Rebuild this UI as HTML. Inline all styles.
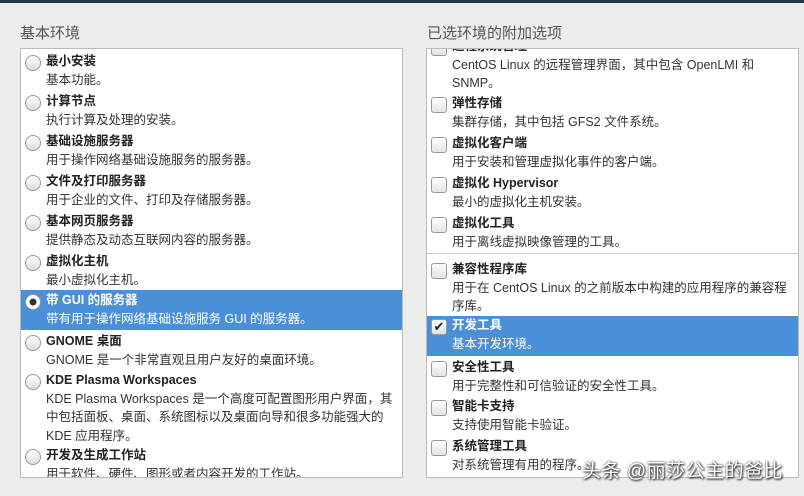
<!DOCTYPE html><html><head><meta charset="utf-8"><style>
body{margin:0;width:804px;height:496px;background:#ececec;font-family:"Liberation Sans","Noto Sans CJK SC",sans-serif;position:relative;overflow:hidden;color:#2e3436}
.top{position:absolute;left:0;top:0;width:804px;height:3px;background:#2a3442}
.h{position:absolute;top:22px;font-size:15px;color:#555}
.box{position:absolute;top:48px;height:428px;background:#fff;border:1px solid #bbb;overflow:hidden}
.it{position:absolute;left:0;right:0;font-size:12.5px;line-height:18.5px}
.it b{font-weight:bold;color:#222}
.it .d{color:#333}
.sel{background:#4a90d9}
.sel b,.sel .d{color:#fff}
.r{position:absolute;left:4px;width:14px;height:14px;border-radius:50%;border:1px solid #999;background:linear-gradient(#fff,#ddd)}
.c{position:absolute;left:4px;width:14px;height:14px;border-radius:3px;border:1px solid #999;background:linear-gradient(#fff,#e2e2e2)}
.t{position:absolute;left:25px;right:4px}
.wm{position:absolute;left:582px;top:456px;font-size:19px;color:#fff;text-shadow:0 0 2px #333,1px 1px 2px #000;letter-spacing:0.5px}
</style></head><body>
<div class="top"></div>
<div class="h" style="left:20px">基本环境</div>
<div class="h" style="left:427px">已选环境的附加选项</div>
<div class="box" style="left:20px;width:381px">
<div class="it" style="top:3px;height:40px"><span class="r" style="top:3px"></span><div class="t"><b>最小安装</b><br><span class="d">基本功能。</span></div></div>
<div class="it" style="top:43px"><span class="r" style="top:3px"></span><div class="t"><b>计算节点</b><br><span class="d">执行计算及处理的安装。</span></div></div>
<div class="it" style="top:83px"><span class="r" style="top:3px"></span><div class="t"><b>基础设施服务器</b><br><span class="d">用于操作网络基础设施服务的服务器。</span></div></div>
<div class="it" style="top:123px"><span class="r" style="top:3px"></span><div class="t"><b>文件及打印服务器</b><br><span class="d">用于企业的文件、打印及存储服务器。</span></div></div>
<div class="it" style="top:163px"><span class="r" style="top:3px"></span><div class="t"><b>基本网页服务器</b><br><span class="d">提供静态及动态互联网内容的服务器。</span></div></div>
<div class="it" style="top:203px"><span class="r" style="top:3px"></span><div class="t"><b>虚拟化主机</b><br><span class="d">最小虚拟化主机。</span></div></div>
<div class="it sel" style="top:241px;height:40px"><span class="r" style="top:4px;background:radial-gradient(#333 30%,#fff 40%)"></span><div class="t" style="top:1px"><b>带 GUI 的服务器</b><br><span class="d">带有用于操作网络基础设施服务 GUI 的服务器。</span></div></div>
<div class="it" style="top:283px"><span class="r" style="top:3px"></span><div class="t"><b>GNOME 桌面</b><br><span class="d">GNOME 是一个非常直观且用户友好的桌面环境。</span></div></div>
<div class="it" style="top:322px"><span class="r" style="top:3px"></span><div class="t"><b>KDE Plasma Workspaces</b><br><span class="d">KDE Plasma Workspaces 是一个高度可配置图形用户界面，其中包括面板、桌面、系统图标以及桌面向导和很多功能强大的 KDE 应用程序。</span></div></div>
<div class="it" style="top:397px"><span class="r" style="top:3px"></span><div class="t"><b>开发及生成工作站</b><br><span class="d">用于软件、硬件、图形或者内容开发的工作站。</span></div></div>
</div>
<div class="box" style="left:426px;width:371px">
<div class="it" style="top:-12px"><span class="c" style="top:3px"></span><div class="t"><b>远程系统管理</b><br><span class="d">CentOS Linux 的远程管理界面，其中包含 OpenLMI 和 SNMP。</span></div></div>
<div class="it" style="top:45px"><span class="c" style="top:3px"></span><div class="t"><b>弹性存储</b><br><span class="d">集群存储，其中包括 GFS2 文件系统。</span></div></div>
<div class="it" style="top:85px"><span class="c" style="top:3px"></span><div class="t"><b>虚拟化客户端</b><br><span class="d">用于安装和管理虚拟化事件的客户端。</span></div></div>
<div class="it" style="top:125px"><span class="c" style="top:3px"></span><div class="t"><b>虚拟化 Hypervisor</b><br><span class="d">最小的虚拟化主机安装。</span></div></div>
<div class="it" style="top:165px"><span class="c" style="top:3px"></span><div class="t"><b>虚拟化工具</b><br><span class="d">用于离线虚拟映像管理的工具。</span></div></div>
<div style="position:absolute;top:204px;left:0;right:0;border-top:1px solid #ccc"></div>
<div class="it" style="top:211px"><span class="c" style="top:3px"></span><div class="t"><b>兼容性程序库</b><br><span class="d">用于在 CentOS Linux 的之前版本中构建的应用程序的兼容程序库。</span></div></div>
<div class="it sel" style="top:267px;height:40px"><span class="c" style="top:3px;font-size:13px;line-height:13px;text-align:center;color:#222">✔</span><div class="t"><b>开发工具</b><br><span class="d">基本开发环境。</span></div></div>
<div class="it" style="top:309px"><span class="c" style="top:3px"></span><div class="t"><b>安全性工具</b><br><span class="d">用于完整性和可信验证的安全性工具。</span></div></div>
<div class="it" style="top:348px"><span class="c" style="top:3px"></span><div class="t"><b>智能卡支持</b><br><span class="d">支持使用智能卡验证。</span></div></div>
<div class="it" style="top:388px"><span class="c" style="top:3px"></span><div class="t"><b>系统管理工具</b><br><span class="d">对系统管理有用的程序。</span></div></div>
</div>
<div class="wm">头条 @丽莎公主的爸比</div>
</body></html>
